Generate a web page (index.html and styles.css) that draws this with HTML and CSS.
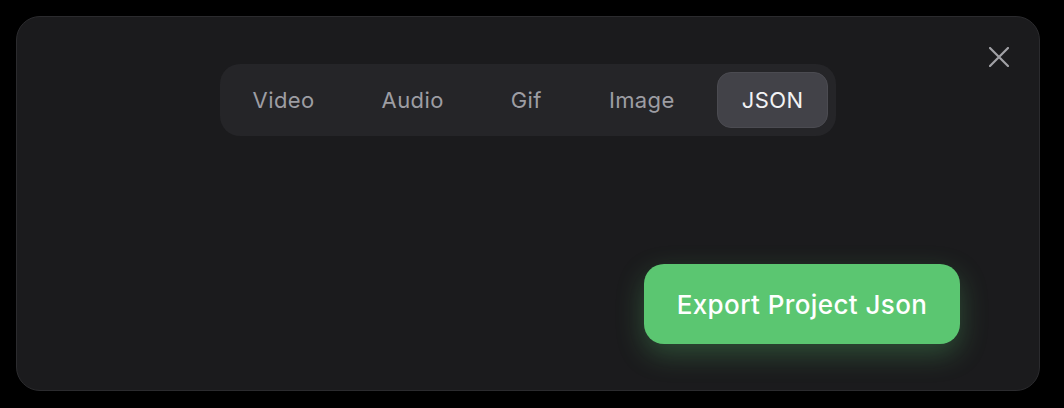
FILE: index.html
```html
<!DOCTYPE html>
<html lang="en">
<head>
<meta charset="utf-8">
<title>Export</title>
<link rel="stylesheet" href="styles.css">
</head>
<body>
<div class="modal">
  <button class="close" aria-label="Close">
    <svg width="20" height="20" viewBox="0 0 20 20"><path d="M1 1 L19 19 M19 1 L1 19" stroke="#a1a1a6" stroke-width="2.2" stroke-linecap="round" fill="none"/></svg>
  </button>
  <div class="tabs">
    <div class="tab">Video</div>
    <div class="tab">Audio</div>
    <div class="tab">Gif</div>
    <div class="tab">Image</div>
    <div class="tab active">JSON</div>
  </div>
  <div class="actions">
    <button class="export">Export Project Json</button>
  </div>
</div>
</body>
</html>
```
FILE: styles.css
```css
* { box-sizing: border-box; }
html, body { margin: 0; background: #000; }
body {
  padding: 16px;
  font-family: Inter, "Noto Sans", "Liberation Sans", sans-serif;
}
.modal {
  position: relative;
  width: 1024px;
  height: 375px;
  background: #1b1b1d;
  border: 1px solid #2b2b2e;
  border-radius: 24px;
  padding: 47px 79px 0 0;
  display: flex;
  flex-direction: column;
}
.close {
  position: absolute;
  top: 30px;
  right: 30px;
  width: 20px;
  height: 20px;
  padding: 0;
  border: 0;
  background: none;
  display: flex;
}
.tabs {
  align-self: center;
  margin-left: 79px;
  display: flex;
  gap: 17px;
  padding: 8px;
  background: #252528;
  border-radius: 20px;
}
.tab {
  height: 56px;
  padding: 0 24px;
  display: flex;
  align-items: center;
  font-size: 22px;
  letter-spacing: 0.4px;
  color: #9d9da3;
  border-radius: 14px;
  border: 1px solid transparent;
}
.tab.active {
  background: #424248;
  border-color: #4b4b51;
  color: #f2f2f4;
}
.actions {
  margin-top: 128px;
  display: flex;
  justify-content: flex-end;
}
.export {
  width: 316px;
  height: 80px;
  border: 0;
  border-radius: 20px;
  background: #5bc671;
  color: #fff;
  font-family: inherit;
  font-size: 26px;
  font-weight: 500;
  letter-spacing: 0.4px;
  box-shadow: 0 10px 28px rgba(91, 198, 113, 0.3);
}
```
